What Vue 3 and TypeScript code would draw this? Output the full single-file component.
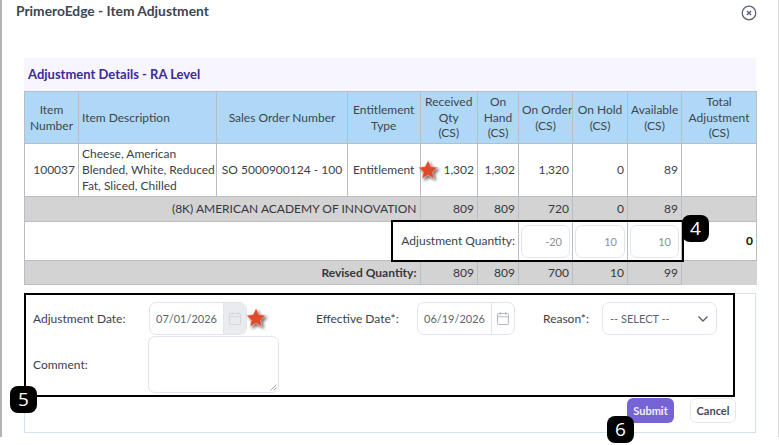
<script setup lang="ts">
interface Column {
  width: number
  label: string[]
  left?: boolean
}

const columns: Column[] = [
  { width: 54, label: ['Item', 'Number'] },
  { width: 138, label: ['Item Description'], left: true },
  { width: 131, label: ['Sales Order Number'] },
  { width: 72.5, label: ['Entitlement', 'Type'] },
  { width: 57.5, label: ['Received', 'Qty', '(CS)'] },
  { width: 41, label: ['On', 'Hand', '(CS)'] },
  { width: 54, label: ['On Order', '(CS)'] },
  { width: 55, label: ['On Hold', '(CS)'] },
  { width: 54, label: ['Available', '(CS)'] },
  { width: 75, label: ['Total', 'Adjustment', '(CS)'] }
]

const description = ['Cheese, American', 'Blended, White, Reduced', 'Fat, Sliced, Chilled']
const schoolTotals = ['809', '809', '720', '0', '89']
const adjustments = ['-20', '10', '10']
const revised = ['809', '809', '700', '10', '99']
</script>

<template>
  <div class="page">
    <div class="modal">
      <header class="modal-head">
        <h1>PrimeroEdge - Item Adjustment</h1>
        <svg class="close" width="16" height="16" viewBox="0 0 16 16" fill="none" stroke="#5a6478">
          <circle cx="8" cy="8" r="6.8" stroke-width="1.3" />
          <path d="M5.9 5.9l4.2 4.2M10.1 5.9l-4.2 4.2" stroke-width="1.4" />
        </svg>
      </header>

      <section class="details">
        <h2>Adjustment Details - RA Level</h2>
        <table>
          <colgroup>
            <col v-for="col in columns" :key="col.label.join()" :style="{ width: col.width + 'px' }">
          </colgroup>
          <thead>
            <tr>
              <th v-for="col in columns" :key="col.label.join()" :class="{ left: col.left }">
                <div v-for="line in col.label" :key="line">{{ line }}</div>
              </th>
            </tr>
          </thead>
          <tbody>
            <tr class="item-row">
              <td class="num">100037</td>
              <td class="desc">
                <div v-for="line in description" :key="line">{{ line }}</div>
              </td>
              <td class="center">SO 5000900124 - 100</td>
              <td class="center">Entitlement</td>
              <td class="num">1,302</td>
              <td class="num">1,302</td>
              <td class="num">1,320</td>
              <td class="num">0</td>
              <td class="num">89</td>
              <td></td>
            </tr>
            <tr class="gray-row school-row">
              <td colspan="4" class="num">(8K) AMERICAN ACADEMY OF INNOVATION</td>
              <td v-for="(val, i) in schoolTotals" :key="i" class="num">{{ val }}</td>
              <td></td>
            </tr>
            <tr class="adjust-row">
              <td colspan="6" class="num">Adjustment Quantity:</td>
              <td v-for="(val, i) in adjustments" :key="i" class="qty-cell">
                <div class="qty">{{ val }}</div>
              </td>
              <td class="num total">0</td>
            </tr>
            <tr class="gray-row revised-row">
              <td colspan="4" class="num strong">Revised Quantity:</td>
              <td v-for="(val, i) in revised" :key="i" class="num">{{ val }}</td>
              <td class="blank"></td>
            </tr>
          </tbody>
        </table>
      </section>

      <section class="form-panel">
        <div class="form-row">
          <label class="label-date">Adjustment Date:</label>
          <div class="date-input disabled">
            <span>07/01/2026</span>
            <i>
              <svg width="14" height="15" viewBox="0 0 14 15" fill="none" stroke="#d3d7df" stroke-width="1.1">
                <rect x="1.5" y="2.5" width="11" height="11" rx="1.5" />
                <path d="M1.5 5.8h11M4.3 1v3M9.7 1v3" />
              </svg>
            </i>
          </div>
          <label class="label-effective">Effective Date*:</label>
          <div class="date-input">
            <span>06/19/2026</span>
            <i>
              <svg width="14" height="15" viewBox="0 0 14 15" fill="none" stroke="#b4bac6" stroke-width="1.1">
                <rect x="1.5" y="2.5" width="11" height="11" rx="1.5" />
                <path d="M1.5 5.8h11M4.3 1v3M9.7 1v3" />
              </svg>
            </i>
          </div>
          <label class="label-reason">Reason*:</label>
          <div class="select">
            <span>-- SELECT --</span>
            <svg width="12" height="8" viewBox="0 0 12 8" fill="none" stroke="#596273" stroke-width="1.4">
              <path d="M1.5 1.5L6 6l4.5-4.5" />
            </svg>
          </div>
        </div>
        <div class="comment-row">
          <label class="label-comment">Comment:</label>
          <div class="comment">
            <svg width="7" height="7" viewBox="0 0 7 7" stroke="#8b8b8b" stroke-width="0.8">
              <path d="M0.5 6.5l6-6M3.5 6.5l3-3" />
            </svg>
          </div>
        </div>
        <div class="actions">
          <button type="button" class="submit">Submit</button>
          <button type="button" class="cancel">Cancel</button>
        </div>
      </section>
    </div>

    <!-- tutorial markup drawn on top of the screen -->
    <svg class="star star-qty" width="22" height="22" viewBox="0 0 22 22">
      <path d="M11 1.5l2.9 6 6.6.9-4.8 4.6 1.2 6.5-5.9-3.1-5.9 3.1 1.2-6.5L1.5 8.4l6.6-.9z" fill="#e04a2c" stroke="#f3c9bd" stroke-width="0.6" />
    </svg>
    <svg class="star star-date" width="22" height="22" viewBox="0 0 22 22">
      <path d="M11 1.5l2.9 6 6.6.9-4.8 4.6 1.2 6.5-5.9-3.1-5.9 3.1 1.2-6.5L1.5 8.4l6.6-.9z" fill="#e04a2c" stroke="#f3c9bd" stroke-width="0.6" />
    </svg>
    <div class="callout callout-qty"></div>
    <div class="callout callout-form"></div>
    <div class="badge badge-4">4</div>
    <div class="badge badge-5">5</div>
    <div class="badge badge-6">6</div>
  </div>
</template>

<style scoped>
.page {
  position: relative;
  width: 779px;
  height: 445px;
  overflow: hidden;
  background: #fff;
  font-family: Lato, "Open Sans", sans-serif;
  font-size: 12px;
  color: #3a3f4a;
}

.modal {
  box-sizing: border-box;
  height: 437px;
  padding: 0 22px 0 22px;
  border-left: 2px solid #b3b3b3;
  border-right: 1px solid #d9d9d9;
}

.modal-head {
  display: flex;
  justify-content: space-between;
  align-items: flex-start;
  height: 58px;
  margin-left: -8px;
  margin-right: -1px;
}

.modal-head h1 {
  margin: 2px 0 0;
  font-size: 13.8px;
  line-height: 18px;
  font-weight: 700;
  color: #3d4552;
}

.close {
  margin-top: 5px;
}

.details h2 {
  margin: 0;
  height: 33px;
  padding-left: 4px;
  background: #f7f5fe;
  font-size: 13px;
  line-height: 32px;
  font-weight: 700;
  color: #3c2b96;
}

table {
  width: 732px;
  table-layout: fixed;
  border-collapse: collapse;
  line-height: 15.7px;
}

th,
td {
  box-sizing: border-box;
  padding: 0 3px;
  border: 1px solid #b9bec4;
  overflow: hidden;
  white-space: nowrap;
}

th {
  height: 52px;
  background: #aed8f5;
  font-weight: 400;
  text-align: center;
  color: #3e4650;
}

th.left {
  text-align: left;
}

.item-row td {
  height: 53px;
}

.center {
  text-align: center;
}

.num {
  text-align: right;
}

.gray-row td {
  background: #d3d3d3;
  color: #33373e;
}

.school-row td {
  height: 25px;
}

.adjust-row td {
  height: 39px;
}

.revised-row td {
  height: 24px;
}

.revised-row td.blank {
  border: none;
}

.strong {
  font-weight: 700;
}

.qty-cell {
  padding: 0 2px;
}

.qty {
  box-sizing: border-box;
  height: 33px;
  padding-right: 7px;
  border: 1px solid #e2e5ee;
  border-radius: 7px;
  background: #fff;
  font-size: 11px;
  line-height: 31px;
  text-align: right;
  color: #8b8f98;
}

.total {
  font-weight: 700;
  color: #111;
}

.form-panel {
  box-sizing: border-box;
  height: 140px;
  margin-top: 8px;
  padding: 8px 19px 0 8px;
  border: 1px solid #d5e2f2;
}

.form-row,
.comment-row {
  display: flex;
  align-items: center;
}

.label-date {
  width: 116px;
  flex: none;
}

.label-comment {
  width: 115px;
  flex: none;
}

.label-effective {
  width: 101px;
  margin-left: 69px;
  flex: none;
}

.label-reason {
  width: 59px;
  margin-left: 28px;
  flex: none;
}

.date-input {
  box-sizing: border-box;
  display: flex;
  width: 98px;
  height: 33px;
  flex: none;
  border: 1px solid #e2e5ee;
  border-radius: 7px;
  overflow: hidden;
  font-size: 11px;
  line-height: 31px;
  color: #5d6470;
}

.date-input span {
  flex: 1;
  padding-left: 6px;
}

.date-input i {
  display: flex;
  align-items: center;
  justify-content: center;
  width: 22px;
  border-left: 1px solid #e2e5ee;
}

.date-input.disabled i {
  background: #e9ebef;
}

.select {
  box-sizing: border-box;
  display: flex;
  align-items: center;
  justify-content: space-between;
  width: 115px;
  height: 33px;
  padding: 0 7px;
  border: 1px solid #e2e5ee;
  border-radius: 7px;
  font-size: 11px;
  color: #5d6470;
}

.comment-row {
  margin-top: 1px;
}

.comment {
  position: relative;
  box-sizing: border-box;
  width: 131px;
  height: 57px;
  border: 1px solid #e2e5ee;
  border-radius: 7px;
}

.comment svg {
  position: absolute;
  right: 1px;
  bottom: 1px;
}

.actions {
  display: flex;
  justify-content: flex-end;
  gap: 16px;
  margin-top: 5px;
}

.actions button {
  box-sizing: border-box;
  height: 25px;
  padding: 0;
  border-radius: 6px;
  font-family: inherit;
  font-size: 11px;
  font-weight: 700;
}

.submit {
  width: 47px;
  border: none;
  background: #7663d6;
  color: #f2effc;
}

.cancel {
  width: 46px;
  border: 1px solid #e6e8ee;
  background: #fff;
  color: #454b57;
}

.star {
  position: absolute;
  filter: drop-shadow(2px 2px 1.5px rgba(40, 40, 40, 0.65));
}

.star-qty {
  left: 417px;
  top: 159px;
}

.star-date {
  left: 245px;
  top: 307px;
}

.callout {
  position: absolute;
  box-sizing: border-box;
  border: 2px solid #000;
}

.callout-qty {
  left: 391px;
  top: 220px;
  width: 293px;
  height: 42px;
}

.callout-form {
  left: 24px;
  top: 293px;
  width: 711px;
  height: 104px;
}

.badge {
  position: absolute;
  width: 27px;
  height: 27px;
  border-radius: 8px;
  background: #000;
  font-family: "Open Sans", sans-serif;
  font-size: 19px;
  line-height: 27px;
  text-align: center;
  color: #fff;
}

.badge-4 {
  left: 682px;
  top: 215px;
}

.badge-5 {
  left: 10px;
  top: 386px;
}

.badge-6 {
  left: 607px;
  top: 416px;
}
</style>
